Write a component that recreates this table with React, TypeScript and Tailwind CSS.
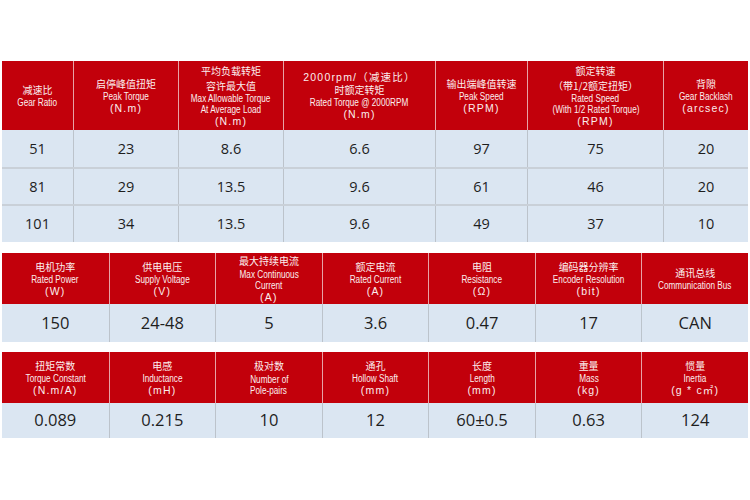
type Line = { t: string; k: "zh" | "en" | "u" };

const zh = (t: string): Line => ({ t, k: "zh" });
const en = (t: string): Line => ({ t, k: "en" });
const u = (t: string): Line => ({ t, k: "u" });

const gear = {
  cols: "grid-cols-[71px_105px_105px_152px_92px_136px_85px]",
  heads: [
    [zh("减速比"), en("Gear Ratio")],
    [zh("启停峰值扭矩"), en("Peak Torque"), u("(N.m)")],
    [zh("平均负载转矩"), zh("容许最大值"), en("Max Allowable Torque"), en("At Average Load"), u("(N.m)")],
    [u("2000rpm/（减速比）"), zh("时额定转矩"), en("Rated Torque @ 2000RPM"), u("(N.m)")],
    [zh("输出端峰值转速"), en("Peak Speed"), u("(RPM)")],
    [zh("额定转速"), zh("（带1/2额定扭矩）"), en("Rated Speed"), en("(With 1/2 Rated Torque)"), u("(RPM)")],
    [zh("背隙"), en("Gear Backlash"), u("(arcsec)")],
  ],
  rows: [
    ["51", "23", "8.6", "6.6", "97", "75", "20"],
    ["81", "29", "13.5", "9.6", "61", "46", "20"],
    ["101", "34", "13.5", "9.6", "49", "37", "10"],
  ],
};

const motor = {
  heads: [
    [zh("电机功率"), en("Rated Power"), u("(W)")],
    [zh("供电电压"), en("Supply Voltage"), u("(V)")],
    [zh("最大持续电流"), en("Max Continuous"), en("Current"), u("(A)")],
    [zh("额定电流"), en("Rated Current"), u("(A)")],
    [zh("电阻"), en("Resistance"), u("(Ω)")],
    [zh("编码器分辨率"), en("Encoder Resolution"), u("(bit)")],
    [zh("通讯总线"), en("Communication Bus")],
  ],
  row: ["150", "24-48", "5", "3.6", "0.47", "17", "CAN"],
};

const mech = {
  heads: [
    [zh("扭矩常数"), en("Torque Constant"), u("(N.m/A)")],
    [zh("电感"), en("Inductance"), u("(mH)")],
    [zh("极对数"), en("Number of"), en("Pole-pairs")],
    [zh("通孔"), en("Hollow Shaft"), u("(mm)")],
    [zh("长度"), en("Length"), u("(mm)")],
    [zh("重量"), en("Mass"), u("(kg)")],
    [zh("惯量"), en("Inertia"), u("(g * c㎡)")],
  ],
  row: ["0.089", "0.215", "10", "12", "60±0.5", "0.63", "124"],
};

const lineCls = {
  zh: "font-['Noto_Sans_CJK_SC',sans-serif] text-[10px] leading-[14.5px]",
  en: "font-['Liberation_Sans',sans-serif] text-[10px] leading-[11px] whitespace-nowrap scale-x-[0.82]",
  u: "font-['Liberation_Sans','Noto_Sans_CJK_SC',sans-serif] text-[10.5px] leading-[12px] tracking-[1.2px]",
};

function HeadCell({ lines, first }: { lines: Line[]; first: boolean }) {
  return (
    <div
      className={`flex flex-col items-center justify-center bg-[#c2000b] text-center text-[#fbeeee] ${
        first ? "" : "border-l border-[#e7a3a6]"
      }`}
    >
      {lines.map((l, i) => (
        <div key={i} className={lineCls[l.k]}>
          {l.t}
        </div>
      ))}
    </div>
  );
}

function DataCell({ v, first, size }: { v: string; first: boolean; size: string }) {
  return (
    <div
      className={`flex items-center justify-center bg-[#dbe6f2] text-[#1e1e1e] font-['Open_Sans',sans-serif] ${size} ${
        first ? "" : "border-l border-[#bcc3cb]"
      }`}
    >
      {v}
    </div>
  );
}

export default function App() {
  return (
    <div className="w-[750px] h-[500px] bg-white px-[2px] pt-[61px]">
      <div className={`grid ${gear.cols} grid-rows-[69px_37px_37px_38px]`}>
        {gear.heads.map((h, i) => (
          <HeadCell key={i} lines={h} first={i === 0} />
        ))}
        {gear.rows.map((r, ri) =>
          r.map((v, i) => (
            <div key={`${ri}-${i}`} className={`grid ${ri > 0 ? "border-t-2 border-[#c9d0d8]" : ""}`}>
              <DataCell v={v} first={i === 0} size="text-[14.5px]" />
            </div>
          ))
        )}
      </div>

      <div className="mt-[11px] grid grid-cols-7 grid-rows-[51px_38px]">
        {motor.heads.map((h, i) => (
          <HeadCell key={i} lines={h} first={i === 0} />
        ))}
        {motor.row.map((v, i) => (
          <DataCell key={i} v={v} first={i === 0} size="text-[16.5px]" />
        ))}
      </div>

      <div className="mt-[10px] grid grid-cols-7 grid-rows-[51px_35px]">
        {mech.heads.map((h, i) => (
          <HeadCell key={i} lines={h} first={i === 0} />
        ))}
        {mech.row.map((v, i) => (
          <DataCell key={i} v={v} first={i === 0} size="text-[16.5px]" />
        ))}
      </div>
    </div>
  );
}
